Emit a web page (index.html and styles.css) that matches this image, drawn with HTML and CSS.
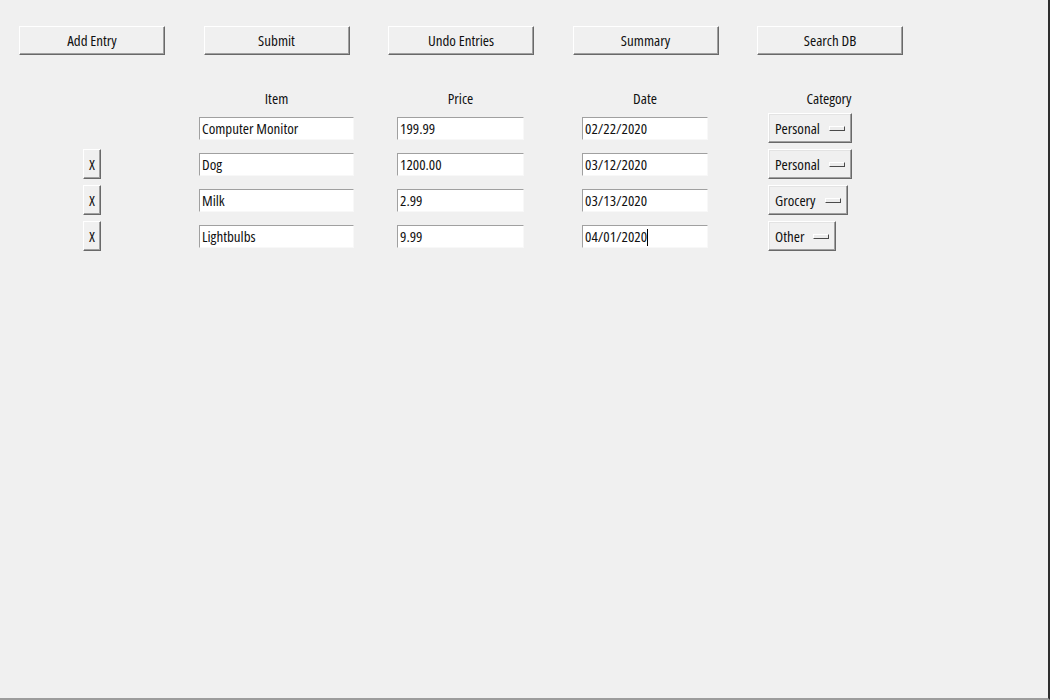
FILE: index.html
```html
<!DOCTYPE html>
<html>
<head>
<meta charset="utf-8">
<title>Expenses</title>
<link rel="stylesheet" href="styles.css">
</head>
<body>
<div class="window">
  <div class="toolbar">
    <button class="btn">Add Entry</button>
    <button class="btn">Submit</button>
    <button class="btn">Undo Entries</button>
    <button class="btn">Summary</button>
    <button class="btn">Search DB</button>
  </div>
  <div class="table">
    <div></div>
    <div class="head w-item">Item</div>
    <div class="head w-price">Price</div>
    <div class="head w-date">Date</div>
    <div class="head w-cat">Category</div>

    <div></div>
    <div class="entry w-item">Computer Monitor</div>
    <div class="entry w-price">199.99</div>
    <div class="entry w-date">02/22/2020</div>
    <div class="menu"><span>Personal</span><span class="ind"></span></div>

    <button class="xbtn">X</button>
    <div class="entry w-item">Dog</div>
    <div class="entry w-price">1200.00</div>
    <div class="entry w-date">03/12/2020</div>
    <div class="menu"><span>Personal</span><span class="ind"></span></div>

    <button class="xbtn">X</button>
    <div class="entry w-item">Milk</div>
    <div class="entry w-price">2.99</div>
    <div class="entry w-date">03/13/2020</div>
    <div class="menu"><span>Grocery</span><span class="ind"></span></div>

    <button class="xbtn">X</button>
    <div class="entry w-item">Lightbulbs</div>
    <div class="entry w-price">9.99</div>
    <div class="entry w-date">04/01/2020<span class="caret"></span></div>
    <div class="menu"><span>Other</span><span class="ind"></span></div>
  </div>
</div>
</body>
</html>
```
FILE: styles.css
```css
html, body {
  margin: 0;
  padding: 0;
  background: #f0f0f0;
}
.window {
  width: 1050px;
  height: 700px;
  box-sizing: border-box;
  border-right: 2px solid #2e2e2e;
  border-bottom: 2px solid #9c9c9c;
  background: #f0f0f0;
  font-family: "Open Sans", "Liberation Sans", Arial, sans-serif;
  font-stretch: 75%;
  font-size: 15px;
  font-weight: 400;
  color: #111;
}
.toolbar {
  display: flex;
  gap: 38.5px;
  padding: 26px 0 0 19px;
}
.btn {
  width: 146px;
  height: 29px;
  box-sizing: border-box;
  margin: 0;
  padding: 0 0 2px 0;
  background: #f0f0f0;
  border: 1px solid;
  border-color: #ffffff #696969 #696969 #ffffff;
  box-shadow: inset -1px -1px 0 #a0a0a0;
  font: inherit;
  color: inherit;
}
.table {
  display: grid;
  grid-template-columns: 116px 198px 185px 186px 122px;
  grid-template-rows: 24px repeat(4, 36px);
  align-items: center;
  justify-items: start;
  padding-left: 83px;
  margin-top: 31px;
}
.head {
  text-align: center;
}
.w-item { width: 155px; }
.w-price { width: 127px; }
.w-date { width: 126px; }
.w-cat { width: 122px; }
.entry {
  height: 23px;
  box-sizing: border-box;
  background: #fff;
  border-top: 1px solid #a0a0a0;
  border-left: 1px solid #a0a0a0;
  border-right: 1px solid #f8f8f8;
  border-bottom: 1px solid #f8f8f8;
  padding: 0 0 0 2px;
  line-height: 21px;
  white-space: nowrap;
}
.caret {
  display: inline-block;
  width: 0;
  height: 17px;
  border-left: 1px solid #000;
  vertical-align: -4px;
}
.xbtn {
  width: 18px;
  height: 30px;
  box-sizing: border-box;
  margin: 0;
  padding: 0;
  background: #f0f0f0;
  border: 1px solid;
  border-color: #ffffff #696969 #696969 #ffffff;
  box-shadow: inset -1px -1px 0 #a0a0a0;
  font: inherit;
  color: inherit;
}
.menu {
  height: 30px;
  box-sizing: border-box;
  display: flex;
  align-items: center;
  padding: 0 6px 0 6px;
  gap: 9px;
  background: #f0f0f0;
  border: 1px solid;
  border-color: #ffffff #696969 #696969 #ffffff;
  box-shadow: inset -1px -1px 0 #a0a0a0, inset 1px 1px 0 #e3e3e3;
}
.ind {
  width: 16px;
  height: 5px;
  box-sizing: border-box;
  background: #ececec;
  border: 1px solid;
  border-color: #ffffff #4a4a4a #4a4a4a #ffffff;
}
```
